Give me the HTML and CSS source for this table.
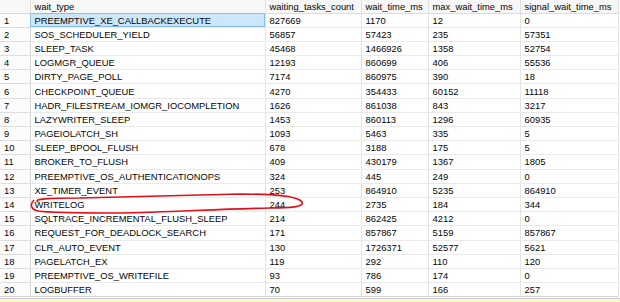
FILE: index.html
```html
<!DOCTYPE html>
<html lang="en">
<head>
  <meta charset="UTF-8">
  <title>Wait stats</title>
  <link rel="stylesheet" href="styles.css">
</head>
<body>
  <div class="grid_wrap">
    <table class="results">
      <colgroup>
        <col class="c_num">
        <col class="c_type">
        <col class="c_count">
        <col class="c_wait">
        <col class="c_max">
        <col class="c_signal">
      </colgroup>
      <thead>
        <tr>
          <th></th>
          <th>wait_type</th>
          <th>waiting_tasks_count</th>
          <th>wait_time_ms</th>
          <th>max_wait_time_ms</th>
          <th>signal_wait_time_ms</th>
        </tr>
      </thead>
      <tbody>
        <tr><td>1</td><td class="selected">PREEMPTIVE_XE_CALLBACKEXECUTE</td><td>827669</td><td>1170</td><td>12</td><td>0</td></tr>
        <tr><td>2</td><td>SOS_SCHEDULER_YIELD</td><td>56857</td><td>57423</td><td>235</td><td>57351</td></tr>
        <tr><td>3</td><td>SLEEP_TASK</td><td>45468</td><td>1466926</td><td>1358</td><td>52754</td></tr>
        <tr><td>4</td><td>LOGMGR_QUEUE</td><td>12193</td><td>860699</td><td>406</td><td>55536</td></tr>
        <tr><td>5</td><td>DIRTY_PAGE_POLL</td><td>7174</td><td>860975</td><td>390</td><td>18</td></tr>
        <tr><td>6</td><td>CHECKPOINT_QUEUE</td><td>4270</td><td>354433</td><td>60152</td><td>11118</td></tr>
        <tr><td>7</td><td>HADR_FILESTREAM_IOMGR_IOCOMPLETION</td><td>1626</td><td>861038</td><td>843</td><td>3217</td></tr>
        <tr><td>8</td><td>LAZYWRITER_SLEEP</td><td>1453</td><td>860113</td><td>1296</td><td>60935</td></tr>
        <tr><td>9</td><td>PAGEIOLATCH_SH</td><td>1093</td><td>5463</td><td>335</td><td>5</td></tr>
        <tr><td>10</td><td>SLEEP_BPOOL_FLUSH</td><td>678</td><td>3188</td><td>175</td><td>5</td></tr>
        <tr><td>11</td><td>BROKER_TO_FLUSH</td><td>409</td><td>430179</td><td>1367</td><td>1805</td></tr>
        <tr><td>12</td><td>PREEMPTIVE_OS_AUTHENTICATIONOPS</td><td>324</td><td>445</td><td>249</td><td>0</td></tr>
        <tr><td>13</td><td>XE_TIMER_EVENT</td><td>253</td><td>864910</td><td>5235</td><td>864910</td></tr>
        <tr><td>14</td><td>WRITELOG</td><td>244</td><td>2735</td><td>184</td><td>344</td></tr>
        <tr><td>15</td><td>SQLTRACE_INCREMENTAL_FLUSH_SLEEP</td><td>214</td><td>862425</td><td>4212</td><td>0</td></tr>
        <tr><td>16</td><td>REQUEST_FOR_DEADLOCK_SEARCH</td><td>171</td><td>857867</td><td>5159</td><td>857867</td></tr>
        <tr><td>17</td><td>CLR_AUTO_EVENT</td><td>130</td><td>1726371</td><td>52577</td><td>5621</td></tr>
        <tr><td>18</td><td>PAGELATCH_EX</td><td>119</td><td>292</td><td>110</td><td>120</td></tr>
        <tr><td>19</td><td>PREEMPTIVE_OS_WRITEFILE</td><td>93</td><td>786</td><td>174</td><td>0</td></tr>
        <tr><td>20</td><td>LOGBUFFER</td><td>70</td><td>599</td><td>166</td><td>257</td></tr>
      </tbody>
    </table>
    <!-- hand drawn mark around the WRITELOG row -->
    <svg class="scribble" width="620" height="302" viewBox="0 0 620 302">
      <path d="M38 202 C33 199 48 198 80 198 C140 197 190 195 240 194 C270 194 298 196 302 202 C305 207 290 208 270 208 C220 209 170 212 120 213 C85 213 50 213 38 211 C30 209 30 204 34 200" fill="none" stroke="#e0101a" stroke-width="1.6"/>
    </svg>
  </div>
  <div class="status_strip"></div>
</body>
</html>
```

FILE: styles.css
```css
*{
  margin: 0;
  padding: 0;
  box-sizing: border-box;
}
body{
  width: 620px;
  height: 302px;
  background: #fff;
  font-family: "Liberation Sans", Arial, sans-serif;
  font-size: 9.4px;
  color: #050505;
  overflow: hidden;
}
.grid_wrap{
  position: relative;
  height: 298px;
}
.results{
  width: 618px;
  border-collapse: collapse;
  table-layout: fixed;
}
.c_num{ width: 30px; }
.c_type{ width: 235px; }
.c_count{ width: 96px; }
.c_wait{ width: 67px; }
.c_max{ width: 92px; }
.c_signal{ width: 98px; }

.results th{
  height: 13px;
  font-weight: normal;
  text-align: left;
  padding: 0 4px;
  background: #f7f7f7;
  border-right: 1px solid #e2e2e2;
  border-bottom: 1px solid #dcdcdc;
  white-space: nowrap;
  overflow: hidden;
}
.results td{
  height: 14.2px;
  padding: 0 4px;
  border-right: 1px solid #e4e4e4;
  border-bottom: 1px solid #eaeaea;
  white-space: nowrap;
  overflow: hidden;
  line-height: 13px;
}
.results td:first-child{
  border-right: 1px solid #d4d4d4;
  border-bottom: 1px solid #dedede;
  background: #fcfcfc;
}
.results tr:last-child td{
  border-bottom: 1px solid #d6d6d6;
}
.results td.selected{
  background: #cce6fa;
  outline: 1px solid #8cbde8;
  outline-offset: -1px;
}
.scribble{
  position: absolute;
  left: 0;
  top: 0;
  pointer-events: none;
}
.status_strip{
  height: 4px;
  border-top: 1px solid #c9c9d2;
  background: #fbf7c9;
}
```
